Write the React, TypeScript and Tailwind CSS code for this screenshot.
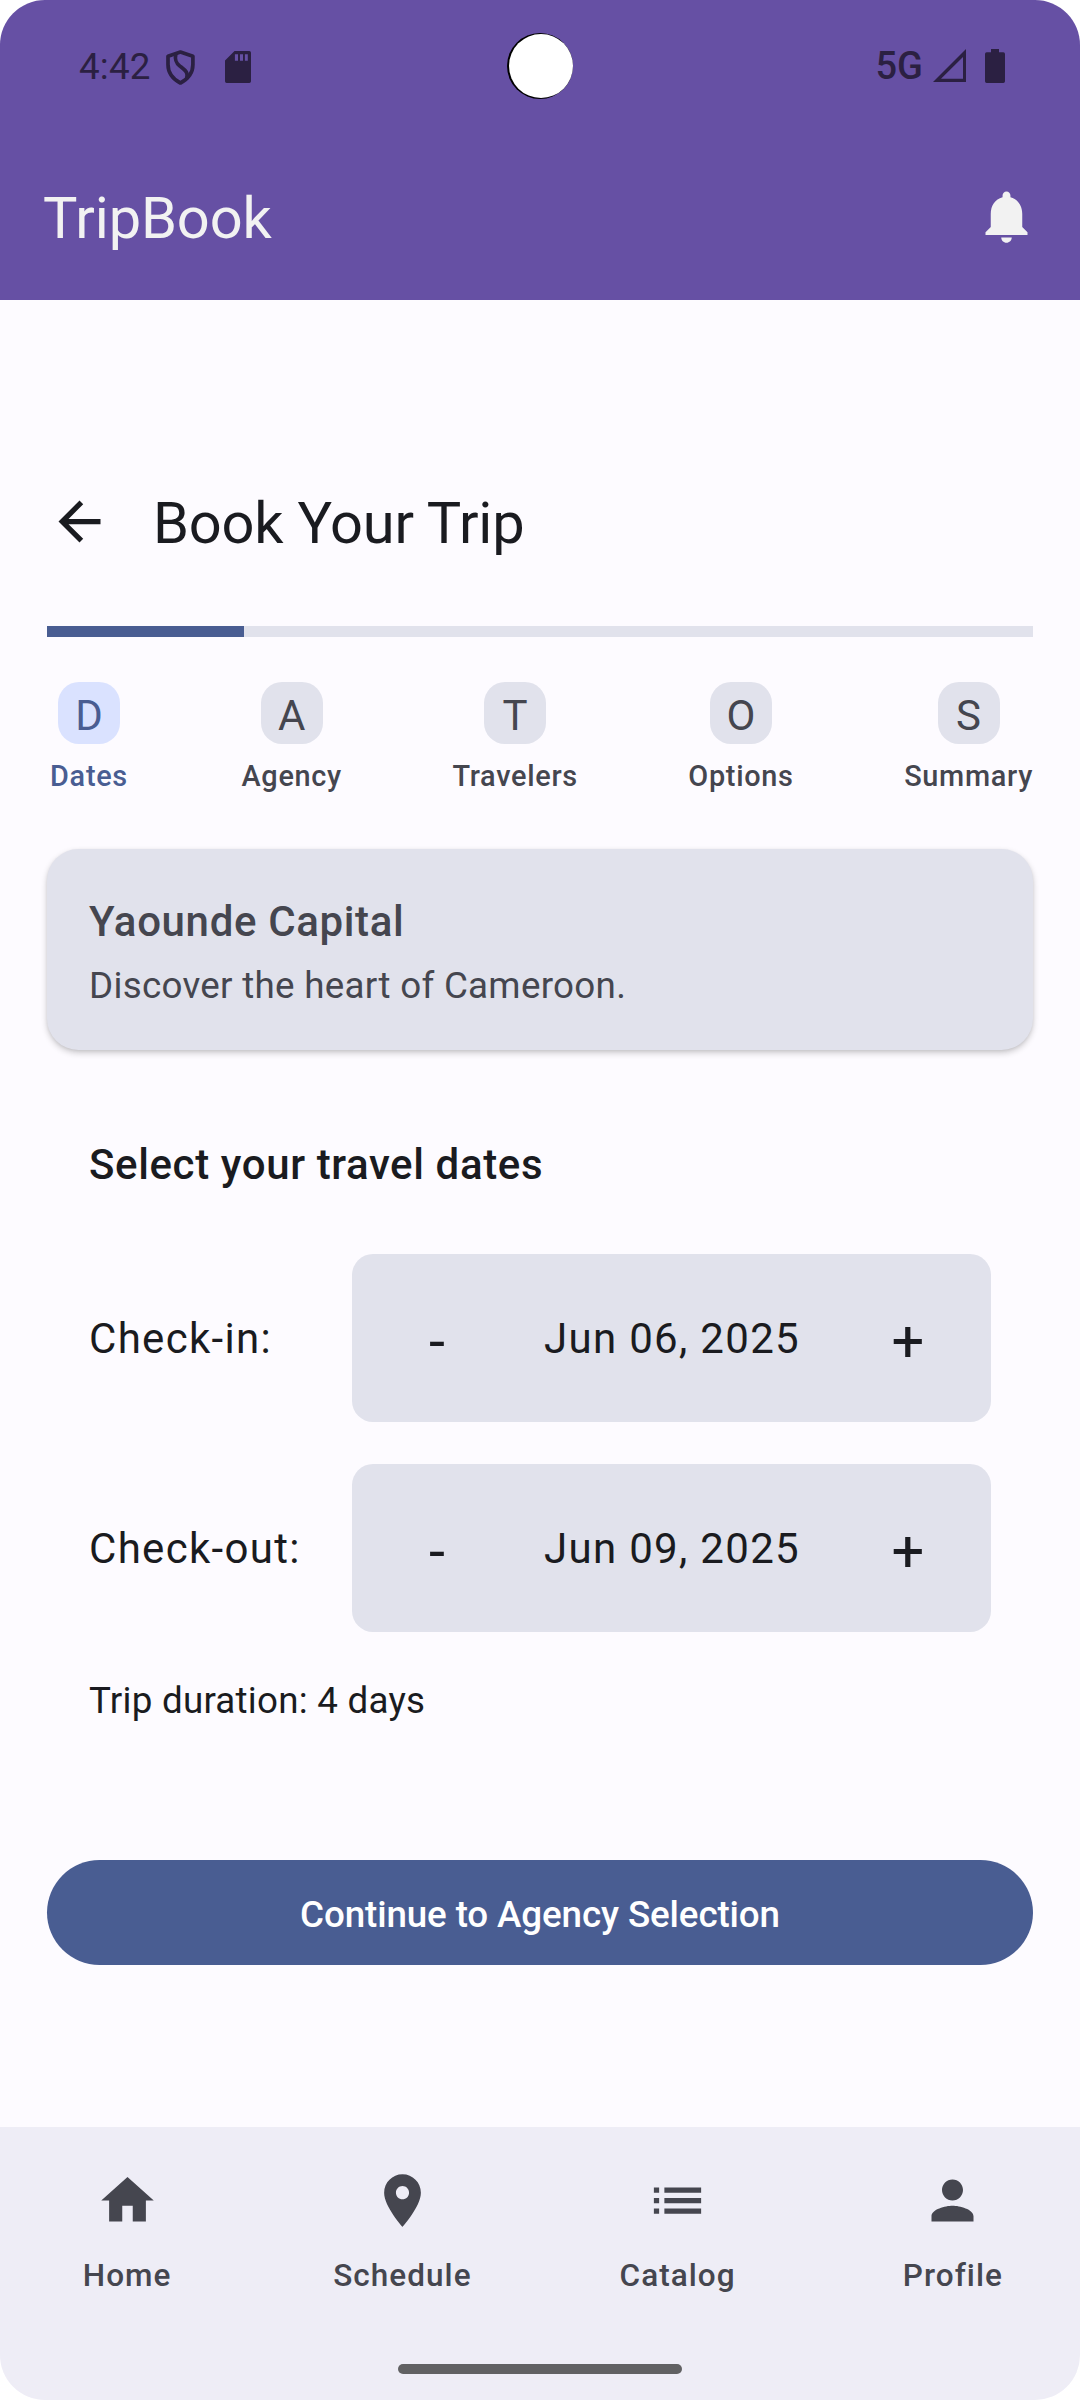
import React from "react";

const ink = "text-[#45464f]";

function StatusBar() {
  return (
    <div className="relative flex h-[130px] items-start text-[#2b2042]">
      <div className="ml-[79px] mt-[45px] w-[87px] text-[36.75px] leading-[44px] tracking-[0.2px]">4:42</div>
      <svg className="mt-[50px] h-[35px] w-[29px]" viewBox="0 0 29 35" fill="none" stroke="currentColor" strokeWidth="3.7">
        <path d="M14.400 2 2 6.200V14.500c0 8.500 4.800 14.500 12.400 18.500C22 29 26.900 23 26.900 14.500V6.200Z" strokeLinejoin="round" />
        <path d="M9.800 3.800C8.600 10 10 12.800 13.600 15.800 18.600 19.800 23 22.200 20.600 29" />
      </svg>
      <svg className="ml-[30px] mt-[51px] h-[32px] w-[26px]" viewBox="0 0 26 32" fill="currentColor">
        <path fillRule="evenodd" d="M9.500 0H24.300A1.700 1.700 0 0 1 26 1.700V30.300A1.700 1.700 0 0 1 24.300 32H1.700A1.700 1.700 0 0 1 0 30.300V9.500ZM9.900 3.200V9.700H13V3.200ZM15 3.200V9.700H18V3.200ZM19.900 3.200V9.700H22.800V3.200Z" />
      </svg>
      <div className="absolute left-[507px] top-[33px] flex size-[66px] items-center justify-end rounded-full bg-black">
        <div className="size-[64.5px] rounded-full bg-white" />
      </div>
      <div className="ml-auto mr-[10px] mt-[44px] text-[38px] font-medium leading-[44px]">5G</div>
      <svg className="mt-[49px] h-[33px] w-[33px]" viewBox="0 0 33 33" fill="currentColor">
        <path fillRule="evenodd" d="M33 0V33H0ZM30 8V29.700H8Z" />
      </svg>
      <svg className="ml-[19px] mr-[75px] mt-[49px] h-[34px] w-[20px]" viewBox="0 0 20 34" fill="currentColor">
        <path d="M6 0H14V3.300H18.300A1.700 1.700 0 0 1 20 5V32.300A1.700 1.700 0 0 1 18.300 34H1.700A1.700 1.700 0 0 1 0 32.300V5A1.700 1.700 0 0 1 1.700 3.300H6Z" />
      </svg>
    </div>
  );
}

function Header() {
  return (
    <header className="h-[300px] bg-[#6650a4]">
      <StatusBar />
      <div className="mt-[51px] flex items-start justify-between pl-[43px] pr-[42px] text-[#f2f2f2]">
        <h1 className="text-[57.75px] leading-[74px] tracking-[-0.1px]">TripBook</h1>
        <svg className="mt-[4px] size-[63px]" viewBox="0 0 24 24" fill="currentColor">
          <path d="M12 22c1.100 0 2-.9 2-2h-4c0 1.100.89 2 2 2zm6-6v-5c0-3.070-1.640-5.640-4.500-6.320V4c0-.83-.67-1.500-1.500-1.500s-1.500.67-1.500 1.500v.68C7.630 5.360 6 7.920 6 11v5l-2 2v1h16v-1l-2-2z" />
        </svg>
      </div>
    </header>
  );
}

const steps = ["Dates", "Agency", "Travelers", "Options", "Summary"];

function Steps() {
  return (
    <div className="mt-[45px] flex justify-between">
      {steps.map((label, i) => (
        <div key={label} className={`flex min-w-[84px] flex-col items-center ${i === 0 ? "text-[#495d92]" : ink}`}>
          <div
            className={`flex h-[62px] w-[62px] justify-center rounded-[21px] pt-[3px] text-[42px] leading-[62px] ${
              i === 0 ? "bg-[#dae2ff]" : "bg-[#e1e2ec]"
            }`}
          >
            {label[0]}
          </div>
          <div className="mt-[11px] text-[28.875px] font-medium leading-[42px] tracking-[0.7px]">{label}</div>
        </div>
      ))}
    </div>
  );
}

function DateRow({ label, value }: { label: string; value: string }) {
  return (
    <div className="flex h-[168px] items-center justify-between text-[42px] leading-[63px] tracking-[1.31px]">
      <span>{label}</span>
      <div className="flex h-full w-[639px] items-center justify-between rounded-[21px] bg-[#e1e2ec] px-[21px]">
        <button className="w-[126px] pl-[2px] pt-[6px] text-[57.75px] tracking-normal">-</button>
        <span className="pl-px">{value}</span>
        <button className="w-[126px] pl-[2px] pt-[6px] text-[57.75px] tracking-normal">+</button>
      </div>
    </div>
  );
}

const tabs = [
  { label: "Home", d: "M10 20v-6h4v6h5v-8h3L12 3 2 12h3v8z" },
  {
    label: "Schedule",
    d: "M12 2C8.130 2 5 5.130 5 9c0 5.250 7 13 7 13s7-7.750 7-13c0-3.870-3.130-7-7-7zm0 9.500c-1.380 0-2.500-1.120-2.500-2.500s1.120-2.500 2.500-2.500 2.500 1.120 2.500 2.500-1.120 2.500-2.500 2.500z",
  },
  { label: "Catalog", d: "M3 13h2v-2H3v2zm0 4h2v-2H3v2zm0-8h2V7H3v2zm4 4h14v-2H7v2zm0 4h14v-2H7v2zM7 7v2h14V7H7z" },
  {
    label: "Profile",
    d: "M12 12c2.210 0 4-1.790 4-4s-1.790-4-4-4-4 1.790-4 4 1.790 4 4 4zm0 2c-2.670 0-8 1.340-8 4v2h16v-2c0-2.660-5.330-4-8-4z",
  },
];

function BottomNav() {
  return (
    <nav className="flex h-[273px] flex-col bg-[#eeedf6]">
      <div className={`grid grid-cols-4 gap-[21px] pt-[42px] ${ink}`}>
        {tabs.map((t) => (
          <div key={t.label} className="flex flex-col items-center">
            <svg className="size-[63px]" viewBox="0 0 24 24" fill="currentColor">
              <path d={t.d} />
            </svg>
            <span className="mt-[23px] text-[31.5px] font-medium leading-[42px] tracking-[1.05px]">{t.label}</span>
          </div>
        ))}
      </div>
      <div className="mb-[26px] mt-auto h-[10px] w-[284px] self-center rounded-full bg-[#616163]" />
    </nav>
  );
}

export default function App() {
  return (
    <div className="h-[2400px] w-[1080px] bg-white font-['Roboto',sans-serif]">
      <div className="flex h-full flex-col overflow-hidden rounded-[45px] bg-[#fdfbff] text-[#1a1b20]">
        <Header />
        <main className="flex-1 px-[47px]">
          <div className="mt-[186px] flex items-center">
            <svg className="ml-[0.5px] mt-[-3px] size-[63px]" viewBox="0 0 24 24" fill="currentColor">
              <path d="M20 11H7.830l5.590-5.590L12 4l-8 8 8 8 1.410-1.410L7.830 13H20v-2z" />
            </svg>
            <h2 className="ml-[42.5px] text-[57.75px] leading-[74px] tracking-[-0.2px]">Book Your Trip</h2>
          </div>

          <div className="mt-[66px] h-[11px] bg-[#e1e2ec]">
            <div className="h-full w-1/5 bg-[#495d92]" />
          </div>

          <Steps />

          <section className={`mt-[52px] h-[201px] rounded-[31.5px] bg-[#e1e2ec] px-[42px] pt-[41px] shadow-[0_3px_6px_rgba(0,0,0,0.2),0_1px_3px_rgba(0,0,0,0.06)] ${ink}`}>
            <h3 className="text-[42px] font-medium leading-[63px] tracking-[0.64px]">Yaounde Capital</h3>
            <p className="mt-[7px] text-[36.75px] leading-[52px] tracking-[0.29px]">Discover the heart of Cameroon.</p>
          </section>

          <section className="px-[42px] pt-[83px]">
            <h3 className="text-[42px] font-medium leading-[63px] tracking-[0.62px]">Select your travel dates</h3>
            <div className="mt-[58px] flex flex-col gap-[42px]">
              <DateRow label="Check-in:" value="Jun 06, 2025" />
              <DateRow label="Check-out:" value="Jun 09, 2025" />
            </div>
            <p className="mt-[43px] text-[36.75px] leading-[52px] tracking-[0.24px]">Trip duration: 4 days</p>
          </section>

          <button className="mt-[133px] h-[105px] w-full rounded-full bg-[#495d92] pt-[4px] text-[36.75px] font-medium leading-[52px] tracking-[-0.12px] text-white">
            Continue to Agency Selection
          </button>
        </main>
        <BottomNav />
      </div>
    </div>
  );
}
